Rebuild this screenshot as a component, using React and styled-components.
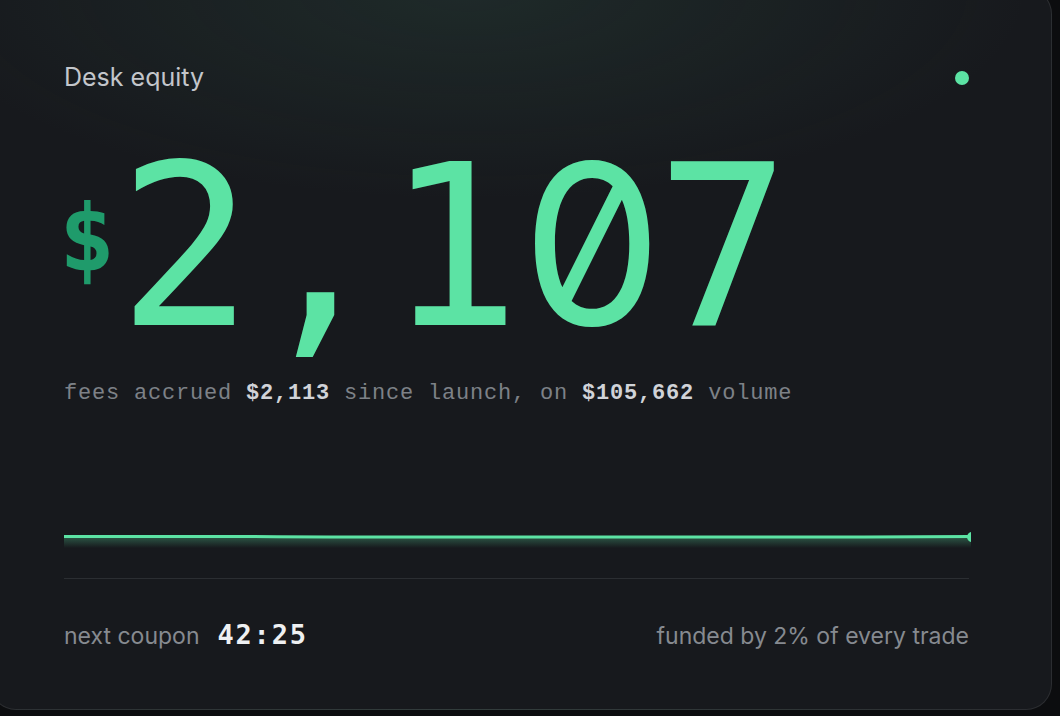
import React from 'react';
import styled, { createGlobalStyle } from 'styled-components';

const GlobalStyle = createGlobalStyle`
    html, body {
        margin: 0;
        padding: 0;
        background: #0c0d0f;
        overflow: hidden;
    }
    body {
        font-family: Inter, "Noto Sans", sans-serif;
    }
`;

const points = [0.6, 0.6, 0.6, 0.6, 0.3, 0, 0, 0, 0, 0, 0, 0, 0, 0, 0, 0, 0.3, 0.6];

function Sparkline() {
    const w = 907;
    const h = 140;
    const base = 129;
    const step = w / (points.length - 1);
    const line = points.map((p, i) => `${i === 0 ? 'M' : 'L'}${(i * step).toFixed(1)},${(base - p).toFixed(1)}`).join(' ');
    const area = `${line} L${w},${h} L0,${h} Z`;
    return (
        <Chart width={w} height={h} viewBox={`0 0 ${w} ${h}`}>
            <defs>
                <linearGradient id='glow' gradientUnits='userSpaceOnUse' x1='0' y1={base} x2='0' y2={base + 11}>
                    <stop offset='0' stopColor='#5ce3a4' stopOpacity='0.3' />
                    <stop offset='1' stopColor='#5ce3a4' stopOpacity='0' />
                </linearGradient>
            </defs>
            <path d={area} fill='url(#glow)' />
            <path d={line} fill='none' stroke='#5ce3a4' strokeWidth='3' />
            <circle cx={w + 1} cy={base} r='5' fill='#5ce3a4' />
        </Chart>
    );
}

function App() {
    return (
        <>
            <GlobalStyle />
            <Card>
                <Header>
                    <Title>Desk equity</Title>
                    <LiveDot />
                </Header>
                <Amount>
                    <Currency>$</Currency>
                    <Figure>2,1<Zero>0</Zero>7</Figure>
                </Amount>
                <Summary>
                    fees accrued <Strong>$2,113</Strong> since launch, on <Strong>$105,662</Strong> volume
                </Summary>
                <Sparkline />
                <Divider />
                <Footer>
                    <Coupon>
                        <Muted>next coupon</Muted>
                        <Timer>42:25</Timer>
                    </Coupon>
                    <Muted>funded by 2% of every trade</Muted>
                </Footer>
            </Card>
        </>
    );
}

const Card = styled.div`
    box-sizing: border-box;
    margin: -12px 0 0 -10px;
    width: 1062px;
    height: 722px;
    padding: 74px 82px 0 73px;
    border-radius: 26px;
    border: 1px solid rgba(255, 255, 255, 0.09);
    background:
        radial-gradient(ellipse 560px 210px at 45% 0%, rgba(60, 110, 90, 0.2), rgba(60, 110, 90, 0) 100%),
        #17191d;
    display: flex;
    flex-direction: column;
`;

const Header = styled.div`
    display: flex;
    justify-content: space-between;
    align-items: center;
    height: 28px;
`;

const Title = styled.span`
    font-size: 25px;
    line-height: 28px;
    color: #c3c6cb;
`;

const LiveDot = styled.span`
    width: 14px;
    height: 14px;
    border-radius: 50%;
    background: #5ce3a4;
    margin-top: 2px;
`;

const Amount = styled.div`
    display: flex;
    align-items: flex-start;
    margin-top: 41px;
`;

const Currency = styled.span`
    font-family: "DejaVu Sans Mono", monospace;
    font-weight: 700;
    font-size: 93px;
    line-height: 1;
    color: #1f9b6b;
    margin-top: 61px;
    margin-left: -5px;
    margin-right: 3px;
`;

const Figure = styled.span`
    font-family: "DejaVu Sans Mono", monospace;
    font-size: 224px;
    line-height: 1;
    letter-spacing: -1px;
    color: #5ce3a4;
`;

const Zero = styled.span`
    font-family: Inter, sans-serif;
    font-feature-settings: "zero" 1, "tnum" 1;
    letter-spacing: -9px;
`;

const Summary = styled.div`
    margin-top: 20px;
    font-family: "Liberation Mono", monospace;
    font-size: 22px;
    line-height: 28px;
    letter-spacing: 0.8px;
    color: #7d8187;
`;

const Strong = styled.b`
    color: #d0d3d8;
    font-weight: 700;
`;

const Chart = styled.svg`
    display: block;
    overflow: hidden;
`;

const Divider = styled.div`
    height: 1px;
    margin-top: 30px;
    background: #2b2e32;
`;

const Footer = styled.div`
    display: flex;
    justify-content: space-between;
    align-items: baseline;
    margin-top: 40px;
`;

const Coupon = styled.div`
    display: flex;
    align-items: baseline;
    gap: 18px;
`;

const Muted = styled.span`
    font-size: 23px;
    color: #868a90;
`;

const Timer = styled.span`
    font-family: "DejaVu Sans Mono", monospace;
    font-weight: 700;
    font-size: 27px;
    line-height: 32px;
    letter-spacing: 1.8px;
    color: #eef0f2;
`;

export default App;
